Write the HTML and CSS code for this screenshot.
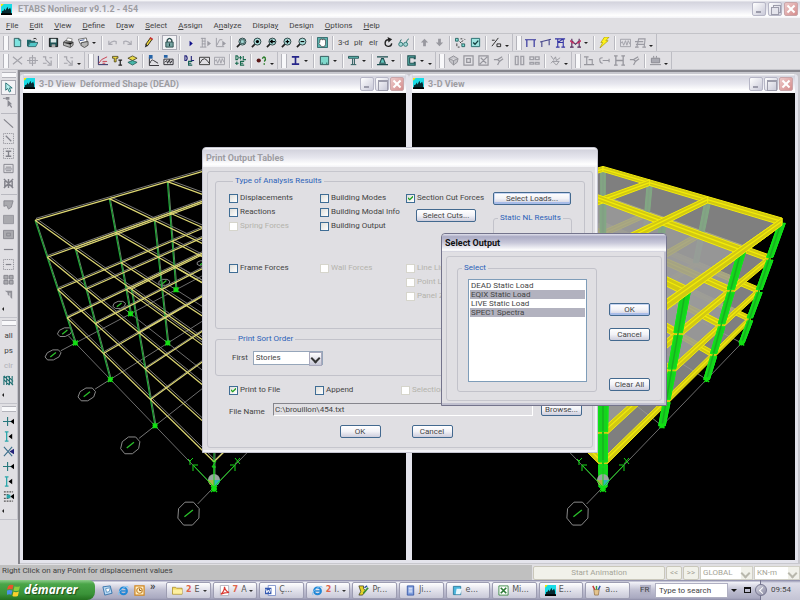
FILE: index.html
```html
<!DOCTYPE html>
<html lang="en">
<head>
    <meta charset="UTF-8">
    <title>ETABS Nonlinear v9.1.2 - 454</title>
    <link rel="stylesheet" href="styles.css">
</head>
<body>

<!-- icons -->
<svg class="sprite">
    <symbol id="app" viewBox="0 0 12 12"><path fill="#19dce6" d="M0 0h12v12H0z"/><path fill="#062a30" d="M1 11V8l2-1 1-2 1 2 2-4 1 3 2-2 1 3v4z"/><path fill="#000" d="M0 10h12v2H0z"/><path fill="#ffe800" d="M0 0h3L0 3z"/></symbol>
    <symbol id="new" viewBox="0 0 12 12"><path fill="#7fe3e0" stroke="#2c5a5c" d="M2.500 1.500h5l2 2v7h-7z"/><path fill="none" stroke="#2c5a5c" d="M7.500 1.500v2h2"/></symbol>
    <symbol id="open" viewBox="0 0 12 12"><path fill="#1d6668" d="M0 3h4l1 1h4v2H3l-2 4H0z"/><path fill="#53c7c9" stroke="#174648" stroke-width=".7" d="M1 10.500L3.500 6H12l-2.500 4.500z"/><path fill="none" stroke="#222" d="M7 2q2-1.500 3.500.5"/></symbol>
    <symbol id="save" viewBox="0 0 12 12"><path fill="#1f5254" stroke="#111" d="M1.500 1.500h9v9h-9z"/><path fill="#d9e6e6" d="M3 2h6v4H3z"/><path fill="#aaa" d="M4 8h4v3H4z"/></symbol>
    <symbol id="print" viewBox="0 0 12 12"><path fill="#fff" stroke="#666" stroke-width=".7" d="M3 5l2-4 5 1-1 4z"/><path fill="#b5b5b5" stroke="#333" stroke-width=".8" d="M.5 5.500L3 4l8 1.500V9l-3 2.500L.5 9z"/><path stroke="#333" stroke-width=".8" d="M1 6l7 2 3-2M8 8v3"/></symbol>
    <symbol id="preview" viewBox="0 0 12 12"><path fill="#fff" stroke="#444" stroke-width=".8" d="M.5 2.500L9 1l1 4-8 2z"/><path fill="#b5b5b5" stroke="#333" stroke-width=".8" d="M4 6l7-1v4l-4 2.500L3 9z"/><path stroke="#334d8f" d="M2 4l5-1"/></symbol>
    <symbol id="undo" viewBox="0 0 12 12"><path fill="none" stroke="#aaaab2" stroke-width="1.300" d="M2 4v4h4M2 8q4-5 8-3v3"/></symbol>
    <symbol id="redo" viewBox="0 0 12 12"><path fill="none" stroke="#aaaab2" stroke-width="1.300" d="M10 4v4H6M10 8q-4-5-8-3v3"/></symbol>
    <symbol id="pencil" viewBox="0 0 12 12"><path fill="#e8d23a" stroke="#2d2714" d="M3 8l5-7 2 1.500-5 7z"/><path fill="#222" d="M2 11.500l1-4 2.500 2z"/><path fill="#c33" d="M8 0l3 2-1 1.500-3-2z"/></symbol>
    <symbol id="lock" viewBox="0 0 12 12"><path fill="none" stroke="#2d4f4f" stroke-width="1.500" d="M3.500 6V3.500q2.500-4 5 0V6"/><path fill="#75a3a1" stroke="#2d4f4f" d="M2 5.500h8v5.500H2z"/><path stroke="#1b3434" d="M6 7v3"/></symbol>
    <symbol id="run" viewBox="0 0 12 12"><path fill="#10108a" d="M5 4l3.500 3L5 10z"/></symbol>
    <symbol id="runframe" viewBox="0 0 12 12"><path fill="none" stroke="#9b9ba3" d="M1 1.500h5M2.500 1v10M5.500 1v10M0 11h7M2 4.500h4M2 7.500h4"/><path fill="#9b9ba3" d="M8 4l4 3-4 3z"/></symbol>
    <symbol id="rungraph" viewBox="0 0 12 12"><path fill="none" stroke="#9b9ba3" d="M1.500 1v9.500H10M2 9l3-6h3"/><path fill="#9b9ba3" d="M8 4l4 3-4 3z"/></symbol>
    <symbol id="lens" viewBox="0 0 12 12"><path stroke="#222" stroke-width="1.800" d="M1 11l3.500-3.500"/><circle cx="7" cy="5" r="3.800" fill="#a9dedb" stroke="#24393a"/></symbol>
    <symbol id="zwin" viewBox="0 0 12 12"><use href="#lens"/><path fill="none" stroke="#24393a" stroke-width=".8" d="M5 3h4v4H5z"/></symbol>
    <symbol id="zfull" viewBox="0 0 12 12"><use href="#lens"/><circle cx="7" cy="5" r="1.800"/></symbol>
    <symbol id="zback" viewBox="0 0 12 12"><use href="#lens"/><path stroke="#000" stroke-width="1.200" d="M4 5h6M7 3L5 5l2 2"/></symbol>
    <symbol id="zin" viewBox="0 0 12 12"><use href="#lens"/><path stroke="#000" stroke-width="1.200" d="M5 5h4M7 3v4"/></symbol>
    <symbol id="zout" viewBox="0 0 12 12"><use href="#lens"/><path stroke="#000" stroke-width="1.200" d="M5 5h4"/></symbol>
    <symbol id="pan" viewBox="0 0 12 12"><path fill="#5cb4b1" stroke="#2f6869" d="M.5.5h11v11H.500z"/><path fill="#fff" stroke="#333" stroke-width=".7" d="M3 6V3h1.200V2h1.300v1h1.300V2H8v1h1.300v5L8 10.500H5L2 7z"/></symbol>
    <symbol id="rotate" viewBox="0 0 12 12"><path fill="none" stroke="#222" stroke-width="1.500" d="M6 3a3.600 3.600 0 1 0 3.500 4"/><path fill="#222" d="M5 0l5 2.500L6 6z"/></symbol>
    <symbol id="glasses" viewBox="0 0 12 12"><g fill="#a6d8d6" stroke="#2f7574"><circle cx="3" cy="8" r="2.200"/><circle cx="8.300" cy="8" r="2.200"/></g><path fill="none" stroke="#2f7574" d="M2 6q1-4 2-3M9 6q1-4 3-4"/></symbol>
    <symbol id="up" viewBox="0 0 12 12"><path fill="#98989f" d="M6 2l4 4H7.500v4h-3V6H2z"/></symbol>
    <symbol id="down" viewBox="0 0 12 12"><path fill="#98989f" d="M6 10L2 6h2.500V2h3v4H10z"/></symbol>
    <symbol id="shrink" viewBox="0 0 12 12"><path fill="#7ee0d8" stroke="#26605f" d="M.5 1.500h3v3h-3zM7.500 7.500h3v3h-3z"/><path fill="none" stroke="#333" d="M6 2h2M10 2l1 1M2 7v3M3 11h2M5 5l2 2M9 4l-2 1"/></symbol>
    <symbol id="opts" viewBox="0 0 12 12"><path fill="#9ee3df" stroke="#246a6b" d="M1.500 1.500h9v9h-9z"/><path fill="none" stroke="#123c3d" stroke-width="1.500" d="M3.500 6l2 2 3.500-4"/></symbol>
    <symbol id="assign" viewBox="0 0 12 12"><path fill="none" stroke="#222" d="M1 10L8 1M1 3.500h3M6.500 7.500h4v3h-4z"/></symbol>
    <symbol id="portal" viewBox="0 0 12 12"><path fill="none" stroke="#34349c" stroke-width="1.300" d="M2 11V3h8v8M0 3h2M10 3h2"/></symbol>
    <symbol id="portal3" viewBox="0 0 12 12"><path fill="none" stroke="#45458b" stroke-width="1.200" d="M2 11V5l8-2v6M0 5.500l12-3"/></symbol>
    <symbol id="braced" viewBox="0 0 12 12"><path fill="none" stroke="#3434a4" stroke-width="1.200" d="M0 2h11M3 2v9M9 2v9M3 6h6M1 11h4M7 11h4M3 6L9 2"/></symbol>
    <symbol id="moment" viewBox="0 0 12 12"><path fill="none" stroke="#4c2857" stroke-width="1.200" d="M2 11V2M10 11V2M2 4l4 4 4-4M0 11h4M8 11h4"/><path stroke="#cf2f63" stroke-width="1.500" d="M0 4l4 3M12 4L8 7"/></symbol>
    <symbol id="bolt" viewBox="0 0 12 12"><path fill="#fff31a" stroke="#a59600" stroke-width=".7" d="M6 0h5L7.500 4H10L1 12l3-6H2z"/></symbol>
    <symbol id="wave" viewBox="0 0 12 12"><path fill="none" stroke="#a0a0a7" d="M.5 2.500h11v8H.500zM1 7l1.500-2L4 9l2-5 1.500 5L9 4l2 4"/></symbol>
    <symbol id="sway" viewBox="0 0 12 12"><path fill="none" stroke="#9b9ba3" stroke-width="1.200" d="M2 11L4 2h7l-1 9M0 5h9M1 8h9M0 11h4M8 11h4"/></symbol>
    <symbol id="cross" viewBox="0 0 12 12"><path fill="none" stroke="#a4a4ab" stroke-width="1.300" d="M1 2l10 8M11 2L1 10"/></symbol>
    <symbol id="move" viewBox="0 0 12 12"><path fill="none" stroke="#a4a4ab" stroke-width="1.200" d="M6 0v12M0 6h12M3 3h6v6H3z"/></symbol>
    <symbol id="node" viewBox="0 0 12 12"><path fill="none" stroke="#a4a4ab" stroke-width="1.300" d="M1 2h3v3M8 3h3M4 5l5 5M10 6v5H6M1 9h4"/></symbol>
    <symbol id="axes" viewBox="0 0 12 12"><path fill="none" stroke="#202058" d="M1.500 1v9.500H12"/><path fill="none" stroke="#c83a4b" d="M2 9l3-4 6-3M6 7h5M6 9h3"/></symbol>
    <symbol id="tees" viewBox="0 0 12 12"><path fill="#f0d940" stroke="#3b3512" stroke-width=".8" d="M.5 1.500h6v2h-2v4h-2v-4h-2z"/><path stroke="#222" stroke-width="1.300" d="M7 5.500h4M9 5v6M7 11h4"/></symbol>
    <symbol id="layers" viewBox="0 0 12 12"><path fill="#e6d84a" stroke="#3b3512" stroke-width=".8" d="M1 3.500L6 1l5 2.500L6 6z"/><path fill="#46b5a9" stroke="#184f4b" stroke-width=".8" d="M1 8l5-2 5 2-5 3z"/></symbol>
    <symbol id="resp" viewBox="0 0 12 12"><path fill="none" stroke="#26262c" d="M1.500 2v9.500H12M2 9q2-5 4-3l5 3"/><path fill="#2563a7" d="M1 0h4v4H1z"/></symbol>
    <symbol id="hist" viewBox="0 0 12 12"><path fill="none" stroke="#26262c" d="M1 4.500h10v6H1zM2 8l2-2 1 3 2-4 1 4 2-3"/><path fill="#2563a7" d="M1 0h4v3H1z"/></symbol>
    <symbol id="dle" viewBox="0 0 12 12"><path fill="none" stroke="#23237a" stroke-width="1.200" d="M1 1v5h1.500q2-2.500 0-5zM8 1v5h3"/><path fill="none" stroke="#175f55" stroke-width="1.200" d="M9 7H5v4h4M5 9h3"/></symbol>
    <symbol id="curve" viewBox="0 0 12 12"><path fill="none" stroke="#333" d="M.5 2.500h11v8H.500zM1 9q2-5 5-5 3 1 5 5"/></symbol>
    <symbol id="combo" viewBox="0 0 12 12"><path fill="none" stroke="#196b4f" stroke-width="1.200" d="M1 1v4h1.500q2-2 0-4zM6 1v4M4.500 3h3M9 1v4h3M2 7v4M0 9h4M10 7H6v4h4M6 9h3"/></symbol>
    <symbol id="mass" viewBox="0 0 12 12"><circle cx="3" cy="6" r="2.300" fill="#5a1717"/><path fill="none" stroke="#267a26" stroke-width="1.500" d="M7 4q1-3 3-1 1 2-1 4M9 9v1.500"/></symbol>
    <symbol id="ibeam" viewBox="0 0 12 12"><path fill="none" stroke="#26268a" stroke-width="1.800" d="M2 2h8M6 2v8M2 10h8"/></symbol>
    <symbol id="csec" viewBox="0 0 12 12"><path fill="#7ed8cb" stroke="#2c5556" d="M1.500 1.500h9v9h-9z"/><path stroke="#2c5556" stroke-width="1.500" d="M3 9h1M8 9h1"/></symbol>
    <symbol id="tbeam" viewBox="0 0 12 12"><path fill="#67c7be" stroke="#1d4f50" d="M.5 1.500h11v2H.500zM5 4v6M7 4v6M3 10.500h6"/></symbol>
    <symbol id="joist" viewBox="0 0 12 12"><path fill="#67c7be" stroke="#1d4f50" stroke-width="1.200" d="M0 2h12M3 9l2-5h2l2 5zM0 10.500h12"/></symbol>
    <symbol id="wallc" viewBox="0 0 12 12"><path fill="#67c7be" stroke="#1d4f50" stroke-width="1.200" d="M10 1H2v10h8V8H9v1H4V3h5v1h1z"/></symbol>
    <symbol id="solid" viewBox="0 0 12 12"><path fill="#c4c4c9" stroke="#909097" d="M1 4l5-3 5 3-1 4-4 3-4-4zM1 4l5 2 5-2M6 6v5"/></symbol>
    <symbol id="sq" viewBox="0 0 12 12"><path fill="none" stroke="#96969d" stroke-width="1.300" d="M1 1h10v10H1zM4 4h4v4H4z"/></symbol>
    <symbol id="sqx" viewBox="0 0 12 12"><path fill="none" stroke="#96969d" stroke-width="1.300" d="M1 1h10v10H1zM2 10L10 2M3 3l6 6"/></symbol>
    <symbol id="split" viewBox="0 0 12 12"><path fill="none" stroke="#a0a0a7" stroke-width="1.500" d="M1.500 1.500h3v9h-3zM7.500 1.500h3v9h-3z"/></symbol>
    <symbol id="splith" viewBox="0 0 12 12"><path fill="none" stroke="#a0a0a7" stroke-width="1.500" d="M1 2h4v3H1zM7 2h4v3H7zM1 8h4v2H1zM7 8h4v2H7z"/></symbol>
    <symbol id="spring" viewBox="0 0 12 12"><path fill="none" stroke="#96969d" d="M1 1l3 4 2-3 1 4 4-3M3 7h7l-3 4zM1 9l3-3"/></symbol>
    <symbol id="hframe" viewBox="0 0 12 12"><path fill="none" stroke="#96969d" stroke-width="1.200" d="M0 2h5M3 2v8M0 10.500h11M5 5h4v5"/></symbol>
    <symbol id="link" viewBox="0 0 12 12"><path fill="none" stroke="#96969d" stroke-width="1.200" d="M4 3q-4 0-3 3 0 3 3 3M4 6h7M11 4v4"/></symbol>
    <symbol id="hh" viewBox="0 0 12 12"><path fill="none" stroke="#96969d" stroke-width="1.400" d="M2 1v10M10 1v10M2 6h8M0 1h4M8 1h4M0 11h4M8 11h4"/></symbol>
    <symbol id="branch" viewBox="0 0 12 12"><path fill="none" stroke="#96969d" stroke-width="1.300" d="M1 5h4l5-3M5 5l2 2-2 4M7 7l4-3"/></symbol>
    <symbol id="table" viewBox="0 0 12 12"><path fill="#aaaab2" stroke="#88888f" d="M1.500 3.500h9v5h-9z"/><path stroke="#88888f" d="M0 10.500h12M4 3V1M7 3V1"/></symbol>
    <symbol id="ptr" viewBox="0 0 12 12"><path fill="#b6f1ef" stroke="#256e73" d="M3 1v8l2-2 2 4 1.500-1L7 6.500h3z"/></symbol>
    <symbol id="reshape" viewBox="0 0 12 12"><path fill="#888890" d="M3 0h4v3H3zM5 3v8l2-2 2 3 1-1-2-3h2z"/><path stroke="#888890" d="M0 1.500h3"/></symbol>
    <symbol id="line" viewBox="0 0 12 12"><path stroke="#83838b" stroke-width="1.300" d="M1 1.500l10 9"/></symbol>
    <symbol id="linebox" viewBox="0 0 12 12"><path fill="none" stroke="#83838b" stroke-dasharray="1 1" d="M.5.500h11v11H.500z"/><path stroke="#83838b" stroke-width="1.300" d="M3 3l6 6"/></symbol>
    <symbol id="colbox" viewBox="0 0 12 12"><path fill="none" stroke="#83838b" stroke-dasharray="1 1" d="M.5.500h11v11H.500z"/><path stroke="#83838b" stroke-width="1.500" d="M3 3.500h6M6 3v6M3 9h6"/></symbol>
    <symbol id="beams" viewBox="0 0 12 12"><path fill="none" stroke="#83838b" d="M1 1.500h10v9H1zM3 4.500h6M2 6.500h8M3 8.500h6"/></symbol>
    <symbol id="brace" viewBox="0 0 12 12"><path fill="none" stroke="#83838b" stroke-width="1.600" d="M1 1l10 10M11 1L1 11M6 1v10M2 2v8M10 2v8"/></symbol>
    <symbol id="area" viewBox="0 0 12 12"><path fill="#a9a9ae" stroke="#88888f" d="M1 2h10L9 9l-3 2-2-4-3 1z"/></symbol>
    <symbol id="rect" viewBox="0 0 12 12"><path fill="#a9a9ae" stroke="#95959c" d="M.5 1.500h11v9H.500z"/></symbol>
    <symbol id="rectn" viewBox="0 0 12 12"><path fill="#a9a9ae" stroke="#88888f" d="M.5 1.500h11v9H.500zM4 4.500h4v3H4z"/></symbol>
    <symbol id="wall" viewBox="0 0 12 12"><path stroke="#83838b" stroke-width="1.300" d="M1 6h10"/></symbol>
    <symbol id="wallbox" viewBox="0 0 12 12"><path fill="none" stroke="#83838b" stroke-dasharray="1 1" d="M.5.500h11v11H.500z"/><path stroke="#83838b" stroke-width="1.300" d="M3 6h6"/></symbol>
    <symbol id="win4" viewBox="0 0 12 12"><path fill="#a9a9ae" stroke="#83838b" d="M1 1.500h4.500v4H1zM7 1.500h4v4H7zM1 7h4.500v4H1zM7 7h4v4H7z"/></symbol>
    <symbol id="flag" viewBox="0 0 12 12"><path fill="#909097" d="M2 2h8v9L8 9V4H7v4L5 6V4z"/></symbol>
    <symbol id="hatch" viewBox="0 0 12 12"><path stroke="#1f6f72" stroke-width="1.200" d="M1 1v10M4 1v10M7 1v10M10 1v10M1 1l10 10M1 5l6 6M5 1l6 6"/></symbol>
    <symbol id="snap1" viewBox="0 0 12 12"><path stroke="#25777c" stroke-width="1.200" d="M0 6h9M5 1v10"/><path d="M12 3v6L8 6z"/></symbol>
    <symbol id="snap2" viewBox="0 0 12 12"><path fill="none" stroke="#2aa6ab" stroke-width="1.400" d="M2 1h4M4 1v10M2 11h4"/><path d="M10 3v6L6 6z"/></symbol>
    <symbol id="snap3" viewBox="0 0 12 12"><path stroke="#3a6e8c" stroke-width="1.200" d="M1 1l9 10M10 1L1 11"/><path fill="#23237a" d="M12 3v6L7 6z"/></symbol>
    <symbol id="snap4" viewBox="0 0 12 12"><path fill="none" stroke="#555" stroke-dasharray="2 1" stroke-width="1.300" d="M1 1h10M1 4h5M1 8h5M1 11h10"/><path fill="#2aa6ab" d="M4 4h4v4H4z"/><path d="M12 3v6L8 6z"/></symbol>
    <symbol id="xp" viewBox="0 0 12 12"><path fill="#e8542d" d="M1 2q2-2 5-1L5 5Q3 4 0 5z"/><path fill="#8ad03d" d="M7 2q2 1 5 0l-1 4q-3 1-5 0z"/><path fill="#4a90e8" d="M0 6q2-1 5 0l-1 4q-2-1-4 0z"/><path fill="#fbd02c" d="M6 7q2 1 5 0l-1 4q-3 1-5 0z"/></symbol>
    <symbol id="desk" viewBox="0 0 12 12"><path fill="#b9daf4" stroke="#3473ab" d="M1 2l8-1 2 8-8 2z"/><path fill="#fff" stroke="#3473ab" stroke-width=".7" d="M4 4l5-1-1 4-3 1z"/></symbol>
    <symbol id="ie" viewBox="0 0 12 12"><circle cx="6" cy="6.500" r="3.700" fill="none" stroke="#2187d6" stroke-width="2.200"/><path stroke="#2187d6" stroke-width="1.500" d="M3 6.500h7"/><path fill="none" stroke="#7cc4f3" d="M1 11Q-1 8 6 3q5-3 5 0"/></symbol>
    <symbol id="outlook" viewBox="0 0 12 12"><path fill="#fff0c8" stroke="#d2861e" stroke-width="1.300" d="M1 1h10v10H1z"/><circle cx="6" cy="6" r="3" fill="none" stroke="#c8872c" stroke-width="1.200"/><path fill="none" stroke="#8a5513" d="M6 4v2h2"/></symbol>
    <symbol id="folder" viewBox="0 0 12 12"><path fill="#f5dc62" stroke="#a3851f" stroke-width=".8" d="M.5 10V2.500H4l1 1h6V10z"/><path fill="#fdf0a2" d="M1 5h10v4.500H1z"/></symbol>
    <symbol id="pdf" viewBox="0 0 12 12"><path fill="#fff" stroke="#b2b2bd" d="M1.500.5h9v11h-9z"/><path fill="none" stroke="#d93a32" stroke-width="1.300" d="M2 10q4-3 4-8 1 5 5 6-5 0-9 2"/></symbol>
    <symbol id="word" viewBox="0 0 12 12"><path fill="#fff" stroke="#7c90c8" d="M3.500.5h8v11h-8z"/><path fill="#355ab2" d="M0 3h7v7H0z"/><path fill="none" stroke="#fff" d="M1 4.500l1 4 1.500-3 1.500 3 1-4"/></symbol>
    <symbol id="prog" viewBox="0 0 12 12"><path fill="#e5d32a" stroke="#3a3a1a" stroke-width=".8" d="M1 1h5v3l2 2-3 5H1l2-4z"/><path stroke="#3b8f36" stroke-width="2" d="M6 9l5-6"/><path stroke="#234d9d" stroke-width="1.500" d="M7 3l3-2"/></symbol>
    <symbol id="doc" viewBox="0 0 12 12"><path fill="#7f9ede" stroke="#3b5ca8" d="M2.500 1h7v10h-7z"/><path stroke="#fff" d="M4 3.500h4M4 5.500h4M4 7.500h4"/></symbol>
    <symbol id="note" viewBox="0 0 12 12"><path fill="#4cb6dd" stroke="#2b7d9f" d="M1.500 1.500h8v9h-8z"/><path fill="#e6f6fc" d="M5 4h6l-2 6H4z"/></symbol>
    <symbol id="excel" viewBox="0 0 12 12"><path fill="#fff" stroke="#3c8b45" d="M1 1h10v10H1z"/><path stroke="#2c7a35" stroke-width="1.800" d="M3 3l6 6M9 3L3 9"/></symbol>
    <symbol id="paint" viewBox="0 0 12 12"><path fill="#e4c48e" stroke="#8b6434" stroke-width=".7" d="M3 5h6l-1 6H4z"/><path stroke="#c2372c" stroke-width="1.500" d="M4 5L2 1"/><path stroke="#3a9a3a" stroke-width="1.500" d="M6 5V1"/><path stroke="#2b56b0" stroke-width="1.500" d="M8 5l2-4"/></symbol>
</svg>

<header class="titlebar app-title">
    <svg class="ico"><use href="#app"/></svg>
    <h1>ETABS Nonlinear v9.1.2 - 454</h1>
    <div class="ctl"><button class="min" aria-label="Minimize"></button><button class="restore" aria-label="Restore"></button><button class="close" aria-label="Close"></button></div>
</header>

<nav class="menubar">
    <a href="#"><u>F</u>ile</a>
    <a href="#"><u>E</u>dit</a>
    <a href="#"><u>V</u>iew</a>
    <a href="#"><u>D</u>efine</a>
    <a href="#">D<u>r</u>aw</a>
    <a href="#"><u>S</u>elect</a>
    <a href="#"><u>A</u>ssign</a>
    <a href="#">A<u>n</u>alyze</a>
    <a href="#">Displa<u>y</u></a>
    <a href="#">Desi<u>g</u>n</a>
    <a href="#"><u>O</u>ptions</a>
    <a href="#"><u>H</u>elp</a>
</nav>

<div class="tools">
    <div class="bar">
        <button aria-label="New"><svg><use href="#new"/></svg></button>
        <button aria-label="Open"><svg><use href="#open"/></svg></button>
        <i></i>
        <button aria-label="Save"><svg><use href="#save"/></svg></button>
        <button aria-label="Print"><svg><use href="#print"/></svg></button>
        <button aria-label="Print preview"><svg><use href="#preview"/></svg></button>
        <b></b>
        <i></i>
        <button aria-label="Undo"><svg><use href="#undo"/></svg></button>
        <button aria-label="Redo"><svg><use href="#redo"/></svg></button>
        <i></i>
        <button aria-label="Refresh"><svg><use href="#pencil"/></svg></button>
        <i></i>
        <button class="on" aria-label="Lock model"><svg><use href="#lock"/></svg></button>
        <i></i>
        <button aria-label="Run"><svg><use href="#run"/></svg></button>
        <button aria-label="Run construction"><svg><use href="#runframe"/></svg></button>
        <button aria-label="Run static nonlinear"><svg><use href="#rungraph"/></svg></button>
        <i></i>
        <button aria-label="Zoom window"><svg><use href="#zwin"/></svg></button>
        <button aria-label="Full view"><svg><use href="#zfull"/></svg></button>
        <button aria-label="Previous zoom"><svg><use href="#zback"/></svg></button>
        <button aria-label="Zoom in"><svg><use href="#zin"/></svg></button>
        <button aria-label="Zoom out"><svg><use href="#zout"/></svg></button>
        <i></i>
        <button aria-label="Pan"><svg><use href="#pan"/></svg></button>
        <i></i>
        <button>3-d</button>
        <button>pl&#x1E5B;</button>
        <button>el&#x1E5B;</button>
        <button aria-label="Rotate"><svg><use href="#rotate"/></svg></button>
        <button aria-label="Perspective"><svg><use href="#glasses"/></svg></button>
        <i></i>
        <button aria-label="Up"><svg><use href="#up"/></svg></button>
        <button aria-label="Down"><svg><use href="#down"/></svg></button>
        <i></i>
        <button aria-label="Shrink"><svg><use href="#shrink"/></svg></button>
        <button aria-label="View options"><svg><use href="#opts"/></svg></button>
        <i></i>
        <button aria-label="Assign"><svg><use href="#assign"/></svg></button>
        <b class="low"></b>
    </div>
    <div class="bar">
        <button aria-label="Member forces"><svg><use href="#portal"/></svg></button>
        <button aria-label="Mode shape"><svg><use href="#portal3"/></svg></button>
        <button aria-label="Deformed shape"><svg><use href="#braced"/></svg></button>
        <button aria-label="Moments"><svg><use href="#moment"/></svg></button>
        <b></b>
        <i></i>
        <button aria-label="Energy"><svg><use href="#bolt"/></svg></button>
        <i></i>
        <button aria-label="Time history"><svg><use href="#wave"/></svg></button>
        <button aria-label="Pushover"><svg><use href="#sway"/></svg></button>
        <b class="low"></b>
    </div>
</div>

<div class="tools">
    <div class="bar">
        <button aria-label="Joint"><svg><use href="#cross"/></svg></button>
        <button aria-label="Move"><svg><use href="#move"/></svg></button>
        <button aria-label="Merge"><svg><use href="#node"/></svg></button>
        <i></i>
        <button aria-label="Edit frame"><svg><use href="#node"/></svg></button>
        <b class="low"></b>
    </div>
    <div class="bar">
        <button aria-label="Materials"><svg><use href="#axes"/></svg></button>
        <button aria-label="Sections"><svg><use href="#tees"/></svg></button>
        <button aria-label="Slabs"><svg><use href="#layers"/></svg></button>
        <i></i>
        <button aria-label="Spectrum"><svg><use href="#resp"/></svg></button>
        <button aria-label="History"><svg><use href="#hist"/></svg></button>
        <i></i>
        <button aria-label="Load cases"><svg><use href="#dle"/></svg></button>
        <button aria-label="Spectrum cases"><svg><use href="#curve"/></svg></button>
        <button aria-label="History cases"><svg><use href="#wave"/></svg></button>
        <i></i>
        <button aria-label="Combinations"><svg><use href="#combo"/></svg></button>
        <i></i>
        <button aria-label="Mass source"><svg><use href="#mass"/></svg></button>
        <b class="low"></b>
    </div>
    <div class="bar">
        <button aria-label="Steel design"><svg><use href="#ibeam"/></svg></button>
        <b></b>
        <i></i>
        <button aria-label="Concrete design"><svg><use href="#csec"/></svg></button>
        <b></b>
        <i></i>
        <button aria-label="Composite design"><svg><use href="#tbeam"/></svg></button>
        <b></b>
        <i></i>
        <button aria-label="Joist design"><svg><use href="#joist"/></svg></button>
        <b></b>
        <i></i>
        <button aria-label="Wall design"><svg><use href="#wallc"/></svg></button>
        <b></b>
        <b class="low"></b>
    </div>
    <div class="bar">
        <button aria-label="Solid"><svg><use href="#solid"/></svg></button>
        <button aria-label="Opening"><svg><use href="#sq"/></svg></button>
        <button aria-label="Diaphragm"><svg><use href="#sqx"/></svg></button>
        <button aria-label="Mesh"><svg><use href="#branch"/></svg></button>
        <i></i>
        <button aria-label="Pier"><svg><use href="#split"/></svg></button>
        <button aria-label="Spandrel"><svg><use href="#splith"/></svg></button>
        <i></i>
        <button aria-label="Loads"><svg><use href="#spring"/></svg></button>
        <b class="low"></b>
    </div>
    <div class="bar">
        <button aria-label="Frame section"><svg><use href="#hframe"/></svg></button>
        <button aria-label="Releases"><svg><use href="#link"/></svg></button>
        <button aria-label="End offsets"><svg><use href="#hh"/></svg></button>
        <button aria-label="Local axes"><svg><use href="#branch"/></svg></button>
        <i></i>
        <button aria-label="Tables"><svg><use href="#table"/></svg></button>
        <b class="low"></b>
    </div>
</div>

<main class="work">
    <aside class="side">
        <div class="vbar">
            <button class="on" aria-label="Pointer"><svg><use href="#ptr"/></svg></button>
            <button aria-label="Reshape"><svg><use href="#reshape"/></svg></button>
            <i></i>
            <button aria-label="Draw line"><svg><use href="#line"/></svg></button>
            <button aria-label="Line in region"><svg><use href="#linebox"/></svg></button>
            <button aria-label="Columns"><svg><use href="#colbox"/></svg></button>
            <button aria-label="Secondary beams"><svg><use href="#beams"/></svg></button>
            <button aria-label="Braces"><svg><use href="#brace"/></svg></button>
            <i></i>
            <button aria-label="Area"><svg><use href="#area"/></svg></button>
            <button aria-label="Rectangle"><svg><use href="#rect"/></svg></button>
            <button aria-label="Area at click"><svg><use href="#rectn"/></svg></button>
            <button aria-label="Wall"><svg><use href="#wall"/></svg></button>
            <button aria-label="Wall in region"><svg><use href="#wallbox"/></svg></button>
            <button aria-label="Window"><svg><use href="#win4"/></svg></button>
            <button aria-label="Door"><svg><use href="#flag"/></svg></button>
            <em></em>
        </div>
        <div class="vbar">
            <button>all</button>
            <button>ps</button>
            <button class="off">clr</button>
            <button aria-label="Intersecting line"><svg><use href="#hatch"/></svg></button>
            <em></em>
        </div>
        <div class="vbar">
            <button aria-label="Snap to points"><svg><use href="#snap1"/></svg></button>
            <button aria-label="Snap to ends"><svg><use href="#snap2"/></svg></button>
            <button aria-label="Snap to intersections"><svg><use href="#snap3"/></svg></button>
            <button aria-label="Snap to perpendicular"><svg><use href="#snap1"/></svg></button>
            <button aria-label="Snap to lines"><svg><use href="#snap2"/></svg></button>
            <button aria-label="Snap to grid"><svg><use href="#snap4"/></svg></button>
            <em></em>
        </div>
    </aside>

    <div class="mdi">
        <section class="view">
            <div class="titlebar">
                <svg class="ico"><use href="#app"/></svg>
                <h2>3-D View&nbsp; Deformed Shape (DEAD)</h2>
                <div class="ctl"><button class="min" aria-label="Minimize"></button><button class="max" aria-label="Maximize"></button><button class="close" aria-label="Close"></button></div>
            </div>
            <svg class="canvas" id="deformed"></svg>
        </section>
        <section class="view">
            <div class="titlebar">
                <svg class="ico"><use href="#app"/></svg>
                <h2>3-D View</h2>
                <div class="ctl"><button class="min" aria-label="Minimize"></button><button class="max" aria-label="Maximize"></button><button class="close" aria-label="Close"></button></div>
            </div>
            <svg class="canvas" id="extruded"></svg>
        </section>
    </div>
</main>

<div class="status">
    <p>Right Click on any Point for displacement values</p>
    <button class="anim" disabled>Start Animation</button>
    <button disabled>&lt;&lt;</button>
    <button disabled>&gt;&gt;</button>
    <div class="combo coords off"><select aria-label="Coordinate system" disabled><option>GLOBAL</option></select></div>
    <div class="combo units off"><select aria-label="Units" disabled><option>KN-m</option></select></div>
</div>

<footer class="taskbar">
    <button class="start"><svg class="ico"><use href="#xp"/></svg>démarrer</button>
    <div class="quick">
        <a href="#" aria-label="Desktop"><svg><use href="#desk"/></svg></a>
        <a href="#" aria-label="Internet Explorer"><svg><use href="#ie"/></svg></a>
        <a href="#" aria-label="Outlook"><svg><use href="#outlook"/></svg></a>
        <span>»</span>
    </div>
    <div class="tasks">
        <button class="grp"><svg><use href="#folder"/></svg><strong>2</strong> E</button>
        <button class="grp"><svg><use href="#pdf"/></svg><strong>7</strong> A</button>
        <button><svg><use href="#word"/></svg>Ç...</button>
        <button class="grp"><svg><use href="#ie"/></svg><strong>2</strong> I.</button>
        <button><svg><use href="#prog"/></svg>Pr...</button>
        <button><svg><use href="#doc"/></svg>Ji...</button>
        <button><svg><use href="#note"/></svg>e...</button>
        <button><svg><use href="#excel"/></svg>Mi...</button>
        <button><svg><use href="#app"/></svg>E...</button>
        <button><svg><use href="#paint"/></svg>a...</button>
    </div>
    <span class="lang">FR</span>
    <input class="search" type="text" value="Type to search" aria-label="Search">
    <span class="deskbar"><b></b><s></s></span>
    <div class="tray"><button aria-label="Show hidden icons"></button><time>09:54</time></div>
</footer>

<section class="dialog print">
    <div class="titlebar"><h2>Print Output Tables</h2></div>
    <div class="panel">
        <fieldset class="types">
            <legend>Type of Analysis Results</legend>
            <div class="col">
                <label><input type="checkbox">Displacements</label>
                <label><input type="checkbox">Reactions</label>
                <label><input type="checkbox" disabled>Spring Forces</label>
                <label class="second"><input type="checkbox">Frame Forces</label>
            </div>
            <div class="col">
                <label><input type="checkbox">Building Modes</label>
                <label><input type="checkbox">Building Modal Info</label>
                <label><input type="checkbox">Building Output</label>
                <label class="second"><input type="checkbox" disabled>Wall Forces</label>
            </div>
            <div class="col">
                <label><input type="checkbox" checked>Section Cut Forces</label>
                <button class="btn cuts">Select Cuts...</button>
                <label><input type="checkbox" disabled>Line Links</label>
                <label><input type="checkbox" disabled>Point Links</label>
                <label><input type="checkbox" disabled>Panel Zones</label>
            </div>
            <div class="col last">
                <button class="btn focus">Select Loads...</button>
                <fieldset class="nl"><legend>Static NL Results</legend></fieldset>
            </div>
        </fieldset>
        <fieldset class="sort">
            <legend>Print Sort Order</legend>
            <label for="first">First</label>
            <div class="combo"><select id="first"><option>Stories</option></select></div>
        </fieldset>
        <div class="row checks">
            <label><input type="checkbox" checked>Print to File</label>
            <label><input type="checkbox">Append</label>
            <label><input type="checkbox" disabled>Selection Only</label>
        </div>
        <div class="row file">
            <label for="fname">File Name</label>
            <input id="fname" type="text" value="C:\brouillon\454.txt" readonly>
            <button class="btn">Browse...</button>
        </div>
        <div class="row ok">
            <button class="btn">OK</button>
            <button class="btn">Cancel</button>
        </div>
    </div>
</section>

<section class="dialog output">
    <div class="titlebar"><h2>Select Output</h2></div>
    <div class="panel">
        <fieldset>
            <legend>Select</legend>
            <select class="list" multiple aria-label="Select">
                <option>DEAD Static Load</option>
                <option selected>EQIX Static Load</option>
                <option>LIVE Static Load</option>
                <option selected>SPEC1 Spectra</option>
            </select>
        </fieldset>
        <div class="btns">
            <button class="btn focus">OK</button>
            <button class="btn">Cancel</button>
            <button class="btn clear">Clear All</button>
        </div>
    </div>
</section>

<script src="model.js"></script>
</body>
</html>
```

FILE: styles.css
```css
* {
    box-sizing: border-box;
}

body {
    margin: 0;
    height: 100vh;
    display: flex;
    flex-direction: column;
    position: relative;
    overflow: hidden;
    background: #e0dfe3;
    color: #444;
    font: 8px/10px Roboto, "Liberation Sans", sans-serif;
}

button, input, select {
    font: inherit;
    color: inherit;
    margin: 0;
    padding: 0;
}

h1, h2, p {
    margin: 0;
}

a {
    color: inherit;
    text-decoration: none;
}

.sprite {
    position: absolute;
    width: 0;
    height: 0;
}

.ico {
    width: 11px;
    height: 11px;
    flex: none;
}

/* title bars */
.titlebar {
    display: flex;
    align-items: center;
    flex: none;
    height: 19px;
    gap: 4px;
    padding: 0 2px 0 1px;
    background: linear-gradient(#fff, #d4d4de 12%, #e6e6ee 50%, #fff 85%, #f2f2f6);
}

.titlebar h1, .titlebar h2 {
    flex: 1;
    font-size: 9px;
    line-height: 12px;
    font-weight: bold;
    color: #9d9da2;
}

.app-title {
    height: 18px;
    gap: 6px;
}

.ctl {
    display: flex;
    gap: 2px;
}

.ctl button {
    position: relative;
    width: 14px;
    height: 14px;
    border: 1px solid #b6b6c6;
    border-radius: 2px;
    background: linear-gradient(135deg, #fff, #c9c9d8);
}

.ctl .min::after {
    content: "";
    position: absolute;
    left: 3px;
    bottom: 2px;
    width: 5px;
    height: 2px;
    background: #9c9cab;
}

.ctl .max::after, .ctl .restore::after, .ctl .restore::before {
    content: "";
    position: absolute;
    left: 2px;
    top: 2px;
    width: 8px;
    height: 8px;
    border: 1px solid #9c9cab;
    border-top-width: 2px;
}

.ctl .restore::after {
    top: 4px;
    width: 6px;
    height: 6px;
    border-top-width: 1px;
    background: #e4e4ec;
}

.ctl .restore::before {
    left: 4px;
    width: 6px;
    height: 6px;
    border-top-width: 1px;
}

.ctl .close {
    border-color: #c9a5a9;
    background: linear-gradient(135deg, #ecc9c9, #d58d8d);
}

.ctl .close::before, .ctl .close::after {
    content: "";
    position: absolute;
    left: 1px;
    top: 5px;
    width: 10px;
    height: 2px;
    background: #fff;
    transform: rotate(45deg);
}

.ctl .close::after {
    transform: rotate(-45deg);
}

/* menu */
.menubar {
    display: flex;
    flex: none;
    gap: 11px;
    height: 16px;
    padding: 3px 6px 0;
    border-bottom: 1px solid #c3c3c8;
}

/* toolbars */
.tools {
    display: flex;
    flex: none;
    height: 18px;
    border-bottom: 1px solid #c6c6cc;
}

.bar {
    display: flex;
    align-items: center;
    border-right: 1px solid #bdbdc4;
}

.bar::before {
    content: "";
    width: 4px;
    height: 14px;
    margin: 0 1px 0 3px;
    border: solid #b4b4bb;
    border-width: 0 1px;
    background: #f8f8fa;
}

.bar button, .vbar button {
    display: flex;
    align-items: center;
    justify-content: center;
    width: 15px;
    height: 15px;
    border: 0;
    background: none;
    color: #444;
}

.bar svg, .vbar svg {
    width: 11px;
    height: 11px;
}

.bar .on, .vbar .on {
    border: 1px solid #aaaab4;
    background: #f3f3f6;
}

.bar i {
    width: 1px;
    height: 14px;
    margin: 0 3px 0 2px;
    background: #b9b9c0;
    box-shadow: 1px 0 #fafafa;
}

.bar b {
    width: 0;
    margin: 0 3px 0 1px;
    border: solid transparent;
    border-width: 2px 2px 0;
    border-top-color: #222;
}

.bar b.low {
    margin-top: 6px;
}

/* work area */
.work {
    display: flex;
    flex: 1;
    min-height: 0;
}

.side {
    flex: none;
    width: 18px;
    overflow: hidden;
}

.vbar {
    display: flex;
    flex-direction: column;
    align-items: center;
    border: solid #c3c3ca;
    border-width: 0 1px 1px 0;
    padding-bottom: 1px;
}

.vbar::before {
    content: "";
    width: 14px;
    height: 4px;
    margin: 2px 0;
    border: solid #b4b4bb;
    border-width: 1px 0;
    background: #f8f8fa;
}

.vbar i {
    width: 16px;
    height: 1px;
    margin: 3px 0 2px;
    background: #b9b9c0;
}

.vbar em {
    align-self: flex-start;
    margin: 5px 0 5px 2px;
    border: solid transparent;
    border-width: 2px 2px 2px 0;
    border-right-color: #222;
}

.vbar .off {
    color: #b0b0b6;
}

.mdi {
    display: flex;
    flex: 1;
    min-width: 0;
    padding: 2px 2px 1px 0;
    border: solid #85858c;
    border-width: 2px 0 0 2px;
    background: #c8c8ce;
}

.view {
    flex: 1;
    min-width: 0;
    display: flex;
    flex-direction: column;
    border: solid #e4e4ec;
    border-width: 0 3px 3px;
    border-radius: 4px 4px 0 0;
    box-shadow: inset 0 0 0 1px #b2b2bd;
    overflow: hidden;
}

.view .ctl {
    gap: 1px;
}

.canvas {
    flex: 1;
    width: 100%;
    min-height: 0;
    background: #000;
}

/* status bar */
.status {
    display: flex;
    flex: none;
    height: 16px;
    padding-top: 2px;
    gap: 1px;
    background: #e0dfe3;
}

.status p {
    flex: 1;
    margin: -1px 0 0;
    padding: 0 2px;
    line-height: 11px;
    background: #c0c0c0;
}

.status button {
    width: 16px;
    height: 14px;
    border: 1px solid #c9c7ba;
    border-radius: 2px;
    background: #f1f1ea;
    color: #a5a498;
}

.status .anim {
    width: 132px;
}

.combo {
    position: relative;
    display: flex;
    height: 14px;
    border: 1px solid #96a6ba;
    background: #fff;
}

.combo select {
    appearance: none;
    width: 100%;
    border: 0;
    padding: 0 2px;
    background: none;
}

.combo::after {
    content: "";
    position: absolute;
    right: 0;
    top: 0;
    width: 11px;
    height: 12px;
    border: 1px solid #a9a9bd;
    background: linear-gradient(#fff, #c6c6d6);
    pointer-events: none;
}

.combo::before {
    content: "";
    position: absolute;
    z-index: 1;
    right: 3px;
    top: 3px;
    width: 5px;
    height: 5px;
    border: solid #333;
    border-width: 0 2px 2px 0;
    transform: rotate(45deg);
    pointer-events: none;
}

.combo.off {
    border-color: #d0cfc5;
    color: #a5a498;
}

.combo.off select {
    opacity: 1;
}

.combo.off::after {
    border: 0;
    background: #f1f1ea;
}

.combo.off::before {
    border-color: #b9b8ad;
}

.coords {
    width: 53px;
}

.units {
    width: 46px;
}

/* taskbar */
.taskbar {
    display: flex;
    align-items: center;
    flex: none;
    height: 20px;
    background: linear-gradient(#7f7fa0, #f0f0f6 12%, #c0c0d2 50%, #a9a9c0 90%, #8e8ea8);
}

.start {
    display: flex;
    align-items: center;
    gap: 4px;
    width: 95px;
    height: 20px;
    padding-left: 7px;
    border: 0;
    border-radius: 0 6px 8px 0;
    background: linear-gradient(#8ccb8a, #4aa548 20%, #3a9238 70%, #23701f);
    color: #fff;
    font: italic bold 12px/16px "Open Sans", sans-serif;
    text-shadow: 1px 1px 1px #1d4d1b;
}

.start .ico {
    width: 13px;
    height: 13px;
}

.quick {
    display: flex;
    align-items: center;
    gap: 5px;
    width: 71px;
    padding-left: 7px;
}

.quick svg {
    display: block;
    width: 11px;
    height: 11px;
}

.quick span {
    font-size: 11px;
    margin-top: -7px;
    font-weight: bold;
}

.tasks {
    display: flex;
    flex: 1;
    min-width: 0;
    gap: 2px;
}

.tasks button {
    position: relative;
    display: flex;
    align-items: center;
    flex: 1;
    min-width: 0;
    height: 17px;
    padding-left: 5px;
    gap: 3px;
    border: 1px solid #9d9db2;
    border-radius: 2px;
    background: linear-gradient(#fff, #e6e6ee 40%, #c9c9d8);
    color: #555;
    font-family: "DejaVu Sans", sans-serif;
    white-space: nowrap;
}

.tasks svg {
    width: 11px;
    height: 11px;
    flex: none;
}

.tasks strong {
    color: #e0664c;
}

.grp::after {
    content: "";
    position: absolute;
    right: 3px;
    top: 7px;
    border: solid transparent;
    border-width: 2px 2px 0;
    border-top-color: #333;
}

.lang {
    width: 11px;
    margin: 0 4px 0 10px;
    background: #b0b0c4;
}

.search {
    width: 73px;
    height: 15px;
    padding: 0 3px;
    border: 1px solid #b0b0c2;
    background: #fff;
}

.deskbar {
    display: flex;
    align-items: center;
    gap: 7px;
    width: 32px;
    padding-left: 3px;
}

.deskbar b {
    border: solid transparent;
    border-width: 3px 3px 0;
    border-top-color: #111;
}

.deskbar s {
    width: 7px;
    height: 6px;
    border: 1px solid #111;
    border-top-width: 2px;
}

.tray {
    display: flex;
    align-items: center;
    gap: 4px;
    width: 40px;
    height: 20px;
    border-left: 1px solid #75758f;
    background: linear-gradient(#8585a5, #dcdce8 15%, #c3c3d4);
}

.tray button {
    position: relative;
    flex: none;
    width: 12px;
    height: 12px;
    margin-left: -6px;
    border: 1px solid #787892;
    border-radius: 50%;
    background: linear-gradient(135deg, #d5d5e0, #8c8ca4);
}

.tray button::after {
    content: "";
    position: absolute;
    left: 4px;
    top: 3px;
    width: 4px;
    height: 4px;
    border: solid #fff;
    border-width: 0 0 1px 1px;
    transform: rotate(45deg);
}

/* dialogs */
.dialog {
    position: absolute;
    display: flex;
    flex-direction: column;
    border: 1px solid #c4c4d0;
    border-radius: 4px 4px 0 0;
    background: #e0dfe3;
    box-shadow: inset -2px -2px #f2f2f6;
}

.dialog .titlebar {
    padding-left: 3px;
    border-radius: 4px 4px 0 0;
}

.panel {
    margin: 4px;
    border: 1px solid #c6c6cd;
    border-radius: 3px;
}

fieldset {
    min-width: 0;
    margin: 0;
    padding: 0;
    border: 1px solid #c2c2ca;
    border-radius: 3px;
}

legend {
    margin-left: 4px;
    padding: 0 2px;
    color: #2c5fb8;
}

.btn {
    width: 41px;
    height: 13px;
    border: 1px solid #43698f;
    border-radius: 2px;
    background: linear-gradient(#fff, #f2f2f7 50%, #cdcddc);
    line-height: 10px;
}

.btn.focus {
    box-shadow: inset 0 -2px #a8bce8, inset 0 0 0 1px #c6d4f2;
}

label {
    display: flex;
    align-items: center;
    gap: 2px;
    height: 14px;
    white-space: nowrap;
}

label:has(:disabled) {
    color: #b4b3ac;
}

input[type="checkbox"] {
    appearance: none;
    position: relative;
    flex: none;
    width: 9px;
    height: 9px;
    border: 1px solid #3f6d95;
    background: linear-gradient(135deg, #dededa, #fff);
}

input[type="checkbox"]:disabled {
    border-color: #d6d5cc;
    background: #fff;
}

input[type="checkbox"]:checked::after {
    content: "";
    position: absolute;
    inset: 1px;
    background: #21a121;
    clip-path: polygon(0 35%, 35% 65%, 100% 0, 100% 40%, 35% 100%, 0 70%);
}

.print {
    left: 202px;
    top: 147px;
    width: 396px;
}

.print .panel {
    height: 277px;
    padding: 4px 7px;
}

.types {
    display: grid;
    grid-template-columns: 91px 86px 87px 80px;
    height: 153px;
    padding: 5px 0 0 13px;
}

.types > legend, .sort > legend {
    margin-left: 4px;
}

.second {
    margin-top: 28px;
}

.cuts {
    display: block;
    width: 60px;
    margin: 4px 0 39px 10px;
}

.last .btn {
    display: block;
    width: 78px;
    margin: 1px 0 8px;
}

.nl {
    width: 79px;
    height: 60px;
}

.sort {
    display: flex;
    height: 42px;
    margin-top: 5px;
    padding: 7px 0 0 16px;
}

.sort .combo {
    width: 70px;
    margin-left: 5px;
}

.row {
    display: flex;
}

.checks {
    display: grid;
    grid-template-columns: 86px 86px 1fr;
    margin-top: 7px;
    padding-left: 14px;
}

.file {
    margin-top: 6px;
    padding-left: 14px;
}

.file label {
    width: 44px;
    padding-top: 4px;
}

.file input {
    width: 260px;
    height: 13px;
    margin-right: 8px;
    padding: 0 1px;
    border: 1px solid;
    border-color: #85858c #fff #fff #85858c;
    background: #e0dfe3;
}

.ok {
    justify-content: center;
    gap: 31px;
    margin-top: 8px;
    padding-right: 8px;
}

.output {
    left: 441px;
    top: 233px;
    width: 226px;
    border-color: #74748c;
    box-shadow: inset -2px -2px #c0c0cf;
}

.output .titlebar {
    height: 18px;
    background: linear-gradient(#e0e0ec, #ababc4 15%, #c9c9da 50%, #fff 90%, #c5c5d3);
}

.output h2 {
    color: #111;
}

.output .panel {
    display: flex;
    height: 145px;
    padding: 6px 11px 8px 10px;
}

.output fieldset {
    width: 141px;
    margin-right: 12px;
}

.list {
    display: block;
    width: 119px;
    height: 103px;
    margin: 6px 10px;
    padding: 1px;
    overflow: hidden;
    border: 1px solid #7f9db9;
    border-radius: 0;
    background: #fff;
    outline: 0;
}

.list option {
    height: 9px;
    min-height: 0;
    padding: 0 1px;
    line-height: 9px;
    color: #444;
}

.list option:checked {
    background: #b2b2bf linear-gradient(#b2b2bf, #b2b2bf);
}

.btns {
    display: flex;
    flex-direction: column;
    gap: 12px;
    padding-top: 40px;
}

.clear {
    margin-top: 25px;
}
```

FILE: model.js
```js
var NS = "http://www.w3.org/2000/svg";
var BAYS = 3;
var STORIES = 4;

// a runs to the left, b to the right, h is the storey
function scale(a, b, h) {
    return 1 / (1 + 0.16 * (a + b) - 0.0833 * h);
}

function project(a, b, h) {
    var s = scale(a, b, h);
    return [191 + (b - a) * 68.4 * s, (487 + 6.9 * (a + b) - 63.75 * h) * s - 93];
}

function add(svg, tag, attrs) {
    var el = document.createElementNS(NS, tag);
    for (var k in attrs) el.setAttribute(k, attrs[k]);
    svg.appendChild(el);
    return el;
}

function line(svg, p, q, color, w, dx, dy) {
    dx = dx || 0;
    dy = dy || 0;
    add(svg, "path", {
        d: "M" + (p[0] + dx) + " " + (p[1] + dy) + "L" + (q[0] + dx) + " " + (q[1] + dy),
        stroke: color, "stroke-width": w || 1, fill: "none"
    });
}

function poly(svg, pts, fill, opacity, stroke) {
    add(svg, "polygon", {points: pts.join(" "), fill: fill, "fill-opacity": opacity, stroke: stroke || "none"});
}

function bubble(svg, a, b, pa, pb) {
    var pts = [];
    for (var i = 0; i < 8; i++) {
        var t = Math.PI / 4 * (i + 0.5);
        pts.push(project(a + 0.11 * Math.cos(t), b + 0.11 * Math.sin(t), 0));
    }
    poly(svg, pts, "none", 1, "#8a8a8a");
    line(svg, project(a + pa * 0.12, b + pb * 0.12, 0), project(a + pa * 0.35, b + pb * 0.35, 0), "#777");
    var c = project(a, b, 0), s = scale(a, b, 0) * 4;
    line(svg, [c[0] - s, c[1] + s * 0.8], [c[0] + s, c[1] - s * 0.8], "#2bc22b", 1.3);
}

function grid(svg, all) {
    for (var i = 0; i <= BAYS; i++) {
        line(svg, project(i, 0, 0), project(i, BAYS, 0), "#6d6d6d");
        line(svg, project(0, i, 0), project(BAYS, i, 0), "#6d6d6d");
        if (all || i == 0) bubble(svg, i, -0.35, 0, 1);
        if (all) bubble(svg, BAYS + 0.35, i, -1, 0);
    }
}

function star(svg, p, r) {
    add(svg, "path", {
        d: "M" + (p[0] - r) + " " + (p[1] - r) + "l" + 2 * r + " " + 2 * r + "m0 " + (-2 * r) + "l" + (-2 * r) + " " + 2 * r +
            "m" + r + " 0v" + (-2 * r) + "m" + (-r) + " " + r + "h" + 2 * r,
        stroke: "#12e012", "stroke-width": 1.4, fill: "none"
    });
}

function axes(svg) {
    add(svg, "circle", {cx: 191, cy: 387, r: 6, fill: "#9aa6a0"});
    add(svg, "path", {d: "M191 387v6a6 6 0 0 0 6-6z", fill: "#2fb6b6"});
    add(svg, "path", {d: "M191 387v6a6 6 0 0 1-6-6z", fill: "#a9b34a"});
    add(svg, "path", {
        d: "M191 394V372M191 394l-20-21m-1 5v-6h5M191 394l20-21m-4-1h5v6" +
            "M165 366l2 2 3-3M167 368v4M212 365l5 6M217 365l-5 6M189 368h4l-4 6h4",
        stroke: "#16dc16", fill: "none"
    });
    star(svg, [191, 396], 3);
}

function drawWire(svg) {
    var a, b, h;
    grid(svg, true);
    // undeformed shape
    for (h = 1; h <= STORIES; h++) {
        for (a = 0; a <= BAYS; a++) {
            line(svg, project(a, 0, h), project(a, BAYS, h), "#7a7a78", 1, 1, -2);
            line(svg, project(0, a, h), project(BAYS, a, h), "#7a7a78", 1, 1, -2);
        }
    }
    for (a = BAYS; a >= 0; a--) {
        for (b = BAYS; b >= 0; b--) {
            line(svg, project(a, b, 0), project(a, b, STORIES), "#5f7f5f", 1, 1, 0);
            line(svg, project(a, b, 0), project(a, b, STORIES), "#22a93a", 1.2);
        }
    }
    for (h = 1; h <= STORIES; h++) {
        for (a = 0; a <= BAYS; a++) {
            line(svg, project(a, 0, h), project(a, BAYS, h), "#ded873", 1.2);
            line(svg, project(0, a, h), project(BAYS, a, h), "#ded873", 1.2);
        }
    }
    for (a = 0; a <= BAYS; a++) {
        for (b = 0; b <= BAYS; b++) star(svg, project(a, b, 0), 2.5);
    }
    axes(svg);
}

// beam hanging below the slab edge
function beam(svg, a1, b1, a2, b2, h) {
    var p = project(a1, b1, h), q = project(a2, b2, h);
    var s = 8 * scale(a1, b1, h), t = 8 * scale(a2, b2, h);
    poly(svg, [[p[0], p[1] - s / 3], [q[0], q[1] - t / 3], [q[0], q[1] + t * 0.7], [p[0], p[1] + s * 0.7]], "#d2c912", 1, "#f3ec08");
    line(svg, p, q, "#f3ec08", 1.2, 0, 1);
}

function column(svg, a, b, h) {
    var p = project(a, b, h), q = project(a, b, h + 1);
    var s = 3.8 * scale(a, b, h), t = 3.8 * scale(a, b, h + 1);
    poly(svg, [[p[0] - s, p[1]], [p[0] + s, p[1]], [q[0] + t, q[1] + 3], [q[0] - t, q[1] + 3]], "#14d41c", 1, "#0fe818");
    line(svg, p, q, "#16b01f", 1.5);
}

function drawSolid(svg) {
    var a, b, h;
    grid(svg, false);
    for (h = 0; h < STORIES; h++) {
        for (a = BAYS; a >= 0; a--)
            for (b = BAYS; b >= 0; b--)
                column(svg, a, b, h);
        poly(svg, [project(0, 0, h + 1), project(BAYS, 0, h + 1), project(BAYS, BAYS, h + 1), project(0, BAYS, h + 1)], "#9b9b9b", 0.82);
        for (a = BAYS; a >= 0; a--) {
            beam(svg, a, 0, a, BAYS, h + 1);
            beam(svg, 0, a, BAYS, a, h + 1);
        }
    }
    // outer faces are nearest to the eye
    for (h = 0; h < STORIES; h++) {
        for (a = BAYS; a >= 0; a--) {
            column(svg, a, 0, h);
            column(svg, 0, a, h);
        }
    }
    for (a = 1; a <= BAYS; a++) {
        star(svg, project(0, a, 0), 2.5);
        star(svg, project(a, 0, 0), 2.5);
    }
    beam(svg, 0, 0, 0, BAYS, STORIES);
    beam(svg, 0, 0, BAYS, 0, STORIES);
    axes(svg);
}

drawWire(document.getElementById("deformed"));
drawSolid(document.getElementById("extruded"));
```
